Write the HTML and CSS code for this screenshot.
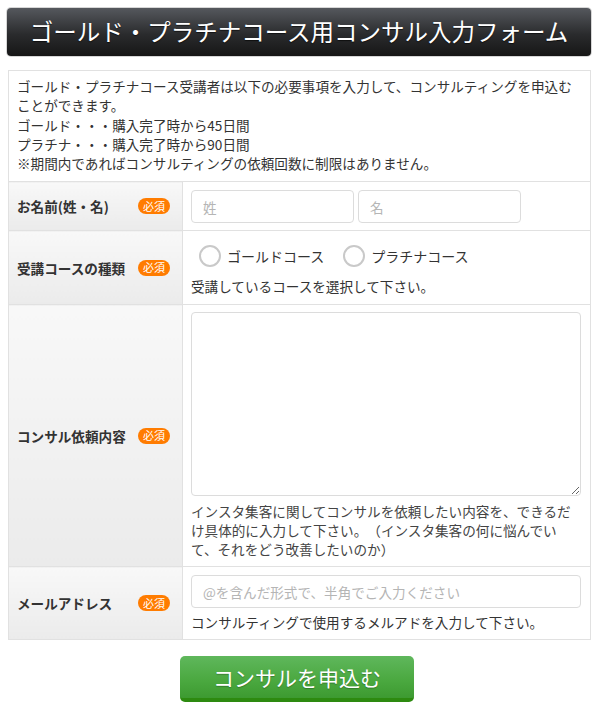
FILE: index.html
```html
<!DOCTYPE html>
<html lang="ja">
<head>
<meta charset="utf-8">
<title>ゴールド・プラチナコース用コンサル入力フォーム</title>
<link rel="stylesheet" href="styles.css">
</head>
<body>
<div class="page">
  <h1 class="title">ゴールド・プラチナコース用コンサル入力フォーム</h1>
  <table class="form">
    <colgroup>
      <col class="col-label">
      <col class="col-field">
    </colgroup>
    <tr>
      <td class="intro" colspan="2">ゴールド・プラチナコース受講者は以下の必要事項を入力して、コンサルティングを申込むことができます。<br>ゴールド・・・購入完了時から45日間<br>プラチナ・・・購入完了時から90日間<br>※期間内であればコンサルティングの依頼回数に制限はありません。</td>
    </tr>
    <tr>
      <th class="label"><div class="label-inner"><span>お名前(姓・名)</span><span class="req">必須</span></div></th>
      <td class="field field-name">
        <div class="name-pair">
          <input class="text name" type="text" placeholder="姓">
          <input class="text name" type="text" placeholder="名">
        </div>
      </td>
    </tr>
    <tr>
      <th class="label"><div class="label-inner"><span>受講コースの種類</span><span class="req">必須</span></div></th>
      <td class="field field-course">
        <div class="radios">
          <label class="radio"><span class="circle"></span>ゴールドコース</label>
          <label class="radio"><span class="circle"></span>プラチナコース</label>
        </div>
        <p class="help help-course">受講しているコースを選択して下さい。</p>
      </td>
    </tr>
    <tr>
      <th class="label"><div class="label-inner"><span>コンサル依頼内容</span><span class="req">必須</span></div></th>
      <td class="field field-body">
        <textarea class="area"></textarea>
        <p class="help help-area">インスタ集客に関してコンサルを依頼したい内容を、できるだ<br>け具体的に入力して下さい。（インスタ集客の何に悩んでい<br>て、それをどう改善したいのか）</p>
      </td>
    </tr>
    <tr>
      <th class="label"><div class="label-inner"><span>メールアドレス</span><span class="req">必須</span></div></th>
      <td class="field field-mail">
        <input class="text mail" type="text" placeholder="@を含んだ形式で、半角でご入力ください">
        <p class="help help-mail">コンサルティングで使用するメルアドを入力して下さい。</p>
      </td>
    </tr>
  </table>
  <div class="actions">
    <button class="submit" type="button">コンサルを申込む</button>
  </div>
</div>
</body>
</html>
```

FILE: styles.css
```css
* { box-sizing: border-box; }

html, body {
  margin: 0;
  padding: 0;
  background: #fff;
}

body {
  font-family: "Noto Sans CJK JP", "Noto Sans", sans-serif;
  color: #333;
  font-size: 13.6px;
  text-spacing-trim: space-all;
}

.page {
  width: 582px;
  margin: 8px 0 0 8px;
}

.title {
  margin: 0 -1px;
  height: 48px;
  border-radius: 4px;
  background: linear-gradient(#55585d, #2a2b2d 55%, #161616);
  box-shadow: 0 0 0 1px #d6d6d6;
  color: #fff;
  font-size: 23.5px;
  font-weight: normal;
  line-height: 47px;
  text-align: center;
  text-shadow: 0 1px 1px rgba(0,0,0,0.6);
}

.form {
  width: 582px;
  margin-top: 14px;
  border-collapse: collapse;
  table-layout: fixed;
}

.col-label { width: 174px; }
.col-field { width: 408px; }

.form td, .form th {
  border: 1px solid #e1e1e1;
}

.intro {
  padding: 6px 8px 8px 8px;
  line-height: 19.3px;
  color: #333;
}

.label {
  padding: 0 12px 0 8px;
  background: linear-gradient(#f8f8f8, #ebebeb);
  text-align: left;
  vertical-align: middle;
  font-weight: bold;
  font-size: 13.6px;
  color: #333;
}

.label-inner {
  display: flex;
  align-items: center;
  justify-content: space-between;
}

.req {
  display: inline-flex;
  align-items: center;
  justify-content: center;
  width: 32px;
  height: 16px;
  border-radius: 8px;
  background: #ff7c00;
  color: #fff;
  font-size: 11px;
  font-weight: normal;
  line-height: 1;
}

.field {
  padding: 7px 8px 7px 8px;
  vertical-align: top;
}

.name-pair {
  display: flex;
  gap: 4px;
}

.text {
  display: block;
  height: 33px;
  border: 1px solid #dcdcdc;
  border-radius: 4px;
  padding: 0 11px;
  font-family: inherit;
  font-size: 13.6px;
  color: #333;
  background: #fff;
  outline: none;
}

.text::placeholder {
  color: #b5b5b5;
}

.name {
  width: 163px;
}

.mail {
  width: 390px;
}

.field-name {
  padding-top: 8px;
}

.radios {
  display: flex;
  align-items: center;
  height: 32px;
  margin-top: 2px;
  padding-left: 8px;
  gap: 19px;
}

.radio {
  display: flex;
  align-items: center;
  gap: 6px;
  font-size: 14px;
  color: #333;
  white-space: nowrap;
}

.circle {
  display: inline-block;
  width: 22px;
  height: 22px;
  border: 2px solid #c9c9c9;
  border-radius: 50%;
  background: #fff;
}

.help {
  margin: 0;
  line-height: 19px;
  color: #333;
}

.help-course {
  margin-top: 5px;
}

.field-course {
  padding-bottom: 8px;
}

.area {
  display: block;
  width: 390px;
  height: 184px;
  border: 1px solid #dcdcdc;
  border-radius: 4px;
  margin: 0;
  font-family: inherit;
  background: #fff;
  outline: none;
}

.help-area {
  margin-top: 6px;
  color: #444;
}

.field-mail {
  padding-top: 8px;
}

.help-mail {
  margin-top: 5px;
}

.actions {
  display: flex;
  justify-content: center;
  margin-top: 16px;
}

.submit {
  width: 234px;
  height: 46px;
  margin-left: -4px;
  border: none;
  border-bottom: 4px solid #2d8a10;
  border-radius: 5px;
  background: linear-gradient(#5fb75c, #4aa83f 60%, #3d9a31);
  color: #fff;
  font-family: inherit;
  font-size: 21px;
  text-shadow: 0 1px 1px rgba(0,0,0,0.25);
  padding: 0;
  cursor: pointer;
}
```
